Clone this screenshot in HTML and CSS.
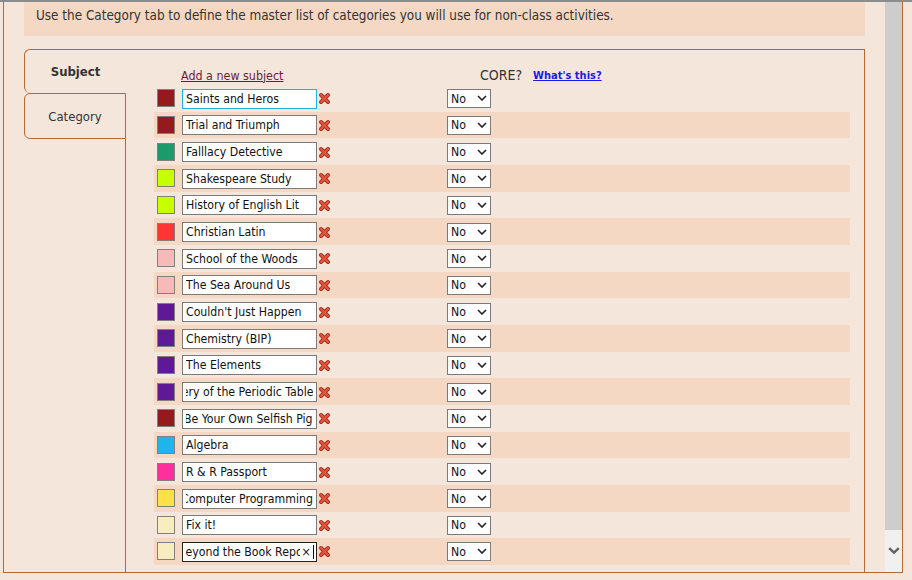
FILE: index.html
```html
<!DOCTYPE html>
<html lang="en">
<head>
    <meta charset="UTF-8">
    <title>Subjects and Categories</title>
    <link rel="stylesheet" href="styles.css">
</head>
<body>
    <div class="frame">
        <div class="viewport">
            <div class="intro">Use the Category tab to define the master list of categories you will use for non-class activities.</div>

            <div class="tabbox">
                <div class="tabs">
                    <div class="tab tab-active">Subject</div>
                    <div class="tab">Category</div>
                    <div class="tab-rest"></div>
                </div>

                <div class="panel">
                    <div class="panel-head">
                        <a class="add-link" href="#">Add a new subject</a>
                        <span class="core-label">CORE?</span>
                        <a class="help-link" href="#">What's this?</a>
                    </div>

                    <div class="subject-list">
                        <div class="subject-row">
                            <span class="swatch" style="background:#951a1d"></span>
                            <input class="subject-name focused" type="text" value="Saints and Heros">
                            <svg class="delete-icon" viewBox="0 0 13 13"><path class="x-edge" d="M3 3L10 10M10 3L3 10"/><path class="x-fill" d="M3 3L10 10M10 3L3 10"/></svg>
                            <span class="core-select"><select><option>No</option><option>Yes</option></select><svg class="chevron" viewBox="0 0 10 6"><path d="M1 1L5 5L9 1"/></svg></span>
                        </div>
                        <div class="subject-row">
                            <span class="swatch" style="background:#951a1d"></span>
                            <input class="subject-name" type="text" value="Trial and Triumph">
                            <svg class="delete-icon" viewBox="0 0 13 13"><path class="x-edge" d="M3 3L10 10M10 3L3 10"/><path class="x-fill" d="M3 3L10 10M10 3L3 10"/></svg>
                            <span class="core-select"><select><option>No</option><option>Yes</option></select><svg class="chevron" viewBox="0 0 10 6"><path d="M1 1L5 5L9 1"/></svg></span>
                        </div>
                        <div class="subject-row">
                            <span class="swatch" style="background:#1b9a6c"></span>
                            <input class="subject-name" type="text" value="Falllacy Detective">
                            <svg class="delete-icon" viewBox="0 0 13 13"><path class="x-edge" d="M3 3L10 10M10 3L3 10"/><path class="x-fill" d="M3 3L10 10M10 3L3 10"/></svg>
                            <span class="core-select"><select><option>No</option><option>Yes</option></select><svg class="chevron" viewBox="0 0 10 6"><path d="M1 1L5 5L9 1"/></svg></span>
                        </div>
                        <div class="subject-row">
                            <span class="swatch" style="background:#c8ff00"></span>
                            <input class="subject-name" type="text" value="Shakespeare Study">
                            <svg class="delete-icon" viewBox="0 0 13 13"><path class="x-edge" d="M3 3L10 10M10 3L3 10"/><path class="x-fill" d="M3 3L10 10M10 3L3 10"/></svg>
                            <span class="core-select"><select><option>No</option><option>Yes</option></select><svg class="chevron" viewBox="0 0 10 6"><path d="M1 1L5 5L9 1"/></svg></span>
                        </div>
                        <div class="subject-row">
                            <span class="swatch" style="background:#c8ff00"></span>
                            <input class="subject-name" type="text" value="History of English Lit">
                            <svg class="delete-icon" viewBox="0 0 13 13"><path class="x-edge" d="M3 3L10 10M10 3L3 10"/><path class="x-fill" d="M3 3L10 10M10 3L3 10"/></svg>
                            <span class="core-select"><select><option>No</option><option>Yes</option></select><svg class="chevron" viewBox="0 0 10 6"><path d="M1 1L5 5L9 1"/></svg></span>
                        </div>
                        <div class="subject-row">
                            <span class="swatch" style="background:#ff3535"></span>
                            <input class="subject-name" type="text" value="Christian Latin">
                            <svg class="delete-icon" viewBox="0 0 13 13"><path class="x-edge" d="M3 3L10 10M10 3L3 10"/><path class="x-fill" d="M3 3L10 10M10 3L3 10"/></svg>
                            <span class="core-select"><select><option>No</option><option>Yes</option></select><svg class="chevron" viewBox="0 0 10 6"><path d="M1 1L5 5L9 1"/></svg></span>
                        </div>
                        <div class="subject-row">
                            <span class="swatch" style="background:#f8b9b9"></span>
                            <input class="subject-name" type="text" value="School of the Woods">
                            <svg class="delete-icon" viewBox="0 0 13 13"><path class="x-edge" d="M3 3L10 10M10 3L3 10"/><path class="x-fill" d="M3 3L10 10M10 3L3 10"/></svg>
                            <span class="core-select"><select><option>No</option><option>Yes</option></select><svg class="chevron" viewBox="0 0 10 6"><path d="M1 1L5 5L9 1"/></svg></span>
                        </div>
                        <div class="subject-row">
                            <span class="swatch" style="background:#f8b9b9"></span>
                            <input class="subject-name" type="text" value="The Sea Around Us">
                            <svg class="delete-icon" viewBox="0 0 13 13"><path class="x-edge" d="M3 3L10 10M10 3L3 10"/><path class="x-fill" d="M3 3L10 10M10 3L3 10"/></svg>
                            <span class="core-select"><select><option>No</option><option>Yes</option></select><svg class="chevron" viewBox="0 0 10 6"><path d="M1 1L5 5L9 1"/></svg></span>
                        </div>
                        <div class="subject-row">
                            <span class="swatch" style="background:#5e1a96"></span>
                            <input class="subject-name" type="text" value="Couldn't Just Happen">
                            <svg class="delete-icon" viewBox="0 0 13 13"><path class="x-edge" d="M3 3L10 10M10 3L3 10"/><path class="x-fill" d="M3 3L10 10M10 3L3 10"/></svg>
                            <span class="core-select"><select><option>No</option><option>Yes</option></select><svg class="chevron" viewBox="0 0 10 6"><path d="M1 1L5 5L9 1"/></svg></span>
                        </div>
                        <div class="subject-row">
                            <span class="swatch" style="background:#5e1a96"></span>
                            <input class="subject-name" type="text" value="Chemistry (BIP)">
                            <svg class="delete-icon" viewBox="0 0 13 13"><path class="x-edge" d="M3 3L10 10M10 3L3 10"/><path class="x-fill" d="M3 3L10 10M10 3L3 10"/></svg>
                            <span class="core-select"><select><option>No</option><option>Yes</option></select><svg class="chevron" viewBox="0 0 10 6"><path d="M1 1L5 5L9 1"/></svg></span>
                        </div>
                        <div class="subject-row">
                            <span class="swatch" style="background:#5e1a96"></span>
                            <input class="subject-name" type="text" value="The Elements">
                            <svg class="delete-icon" viewBox="0 0 13 13"><path class="x-edge" d="M3 3L10 10M10 3L3 10"/><path class="x-fill" d="M3 3L10 10M10 3L3 10"/></svg>
                            <span class="core-select"><select><option>No</option><option>Yes</option></select><svg class="chevron" viewBox="0 0 10 6"><path d="M1 1L5 5L9 1"/></svg></span>
                        </div>
                        <div class="subject-row">
                            <span class="swatch" style="background:#5e1a96"></span>
                            <input class="subject-name" type="text" value="The Mystery of the Periodic Table" data-scroll="end">
                            <svg class="delete-icon" viewBox="0 0 13 13"><path class="x-edge" d="M3 3L10 10M10 3L3 10"/><path class="x-fill" d="M3 3L10 10M10 3L3 10"/></svg>
                            <span class="core-select"><select><option>No</option><option>Yes</option></select><svg class="chevron" viewBox="0 0 10 6"><path d="M1 1L5 5L9 1"/></svg></span>
                        </div>
                        <div class="subject-row">
                            <span class="swatch" style="background:#951a1d"></span>
                            <input class="subject-name" type="text" value="How to Be Your Own Selfish Pig" data-scroll="end">
                            <svg class="delete-icon" viewBox="0 0 13 13"><path class="x-edge" d="M3 3L10 10M10 3L3 10"/><path class="x-fill" d="M3 3L10 10M10 3L3 10"/></svg>
                            <span class="core-select"><select><option>No</option><option>Yes</option></select><svg class="chevron" viewBox="0 0 10 6"><path d="M1 1L5 5L9 1"/></svg></span>
                        </div>
                        <div class="subject-row">
                            <span class="swatch" style="background:#1fb5ea"></span>
                            <input class="subject-name" type="text" value="Algebra">
                            <svg class="delete-icon" viewBox="0 0 13 13"><path class="x-edge" d="M3 3L10 10M10 3L3 10"/><path class="x-fill" d="M3 3L10 10M10 3L3 10"/></svg>
                            <span class="core-select"><select><option>No</option><option>Yes</option></select><svg class="chevron" viewBox="0 0 10 6"><path d="M1 1L5 5L9 1"/></svg></span>
                        </div>
                        <div class="subject-row">
                            <span class="swatch" style="background:#ff2f9b"></span>
                            <input class="subject-name" type="text" value="R &amp; R Passport">
                            <svg class="delete-icon" viewBox="0 0 13 13"><path class="x-edge" d="M3 3L10 10M10 3L3 10"/><path class="x-fill" d="M3 3L10 10M10 3L3 10"/></svg>
                            <span class="core-select"><select><option>No</option><option>Yes</option></select><svg class="chevron" viewBox="0 0 10 6"><path d="M1 1L5 5L9 1"/></svg></span>
                        </div>
                        <div class="subject-row">
                            <span class="swatch" style="background:#ffdf4a"></span>
                            <input class="subject-name" type="text" value="Computer Programming" data-scroll="end">
                            <svg class="delete-icon" viewBox="0 0 13 13"><path class="x-edge" d="M3 3L10 10M10 3L3 10"/><path class="x-fill" d="M3 3L10 10M10 3L3 10"/></svg>
                            <span class="core-select"><select><option>No</option><option>Yes</option></select><svg class="chevron" viewBox="0 0 10 6"><path d="M1 1L5 5L9 1"/></svg></span>
                        </div>
                        <div class="subject-row">
                            <span class="swatch" style="background:#f8ecc0"></span>
                            <input class="subject-name" type="text" value="Fix it!">
                            <svg class="delete-icon" viewBox="0 0 13 13"><path class="x-edge" d="M3 3L10 10M10 3L3 10"/><path class="x-fill" d="M3 3L10 10M10 3L3 10"/></svg>
                            <span class="core-select"><select><option>No</option><option>Yes</option></select><svg class="chevron" viewBox="0 0 10 6"><path d="M1 1L5 5L9 1"/></svg></span>
                        </div>
                        <div class="subject-row">
                            <span class="swatch" style="background:#f8ecc0"></span>
                            <span class="editing">
                                <input class="subject-name active" type="text" value="Beyond the Book Report" data-scroll="8">
                                <span class="clear-btn">&times;</span>
                                <span class="caret"></span>
                            </span>
                            <svg class="delete-icon" viewBox="0 0 13 13"><path class="x-edge" d="M3 3L10 10M10 3L3 10"/><path class="x-fill" d="M3 3L10 10M10 3L3 10"/></svg>
                            <span class="core-select"><select><option>No</option><option>Yes</option></select><svg class="chevron" viewBox="0 0 10 6"><path d="M1 1L5 5L9 1"/></svg></span>
                        </div>
                    </div>
                </div>
            </div>
        </div>

        <div class="scrollbar">
            <div class="scroll-thumb"></div>
            <div class="scroll-end">
                <svg class="scroll-arrow" viewBox="0 0 12 7"><path d="M1.2 1.2L6 5.6L10.8 1.2"/></svg>
            </div>
        </div>
    </div>

    <script src="script.js"></script>
</body>
</html>
```

FILE: styles.css
```css
body {
    margin: 0;
    border-top: 2px solid #8c8c8c;
    background-color: #f5e6dc;
    font-family: "DejaVu Sans Condensed", "DejaVu Sans", Verdana, sans-serif;
    color: #333;
}
.frame {
    display: flex;
    width: 900px;
    height: 571px;
    margin-left: 3px;
    box-sizing: border-box;
    border-left: 1px solid #b5692e;
    border-right: 1px solid #b5692e;
    border-bottom: 1px solid #b5692e;
}
.viewport {
    flex: 1;
    overflow: hidden;
    padding: 0 20px;
}
.intro {
    background-color: #f5d8c3;
    height: 34px;
    box-sizing: border-box;
    padding: 5px 12px 0;
    line-height: 18px;
    font-size: 13.4px;
}
.tabbox {
    display: flex;
    margin-top: 13px;
}
.tabs {
    display: flex;
    flex-direction: column;
    width: 102px;
    flex-shrink: 0;
}
.tab {
    height: 46px;
    box-sizing: border-box;
    display: flex;
    align-items: center;
    justify-content: center;
    font-size: 13px;
    border: 1px solid #b5692e;
    border-radius: 6px 0 0 6px;
}
.tab-active {
    height: 44px;
    border-right: none;
    border-bottom: none;
    font-weight: bold;
}
.tab-rest {
    flex: 1;
    border-right: 1px solid #b5692e;
}
.panel {
    flex: 1;
    border-top: 1px solid #b5692e;
    border-right: 1px solid #b5692e;
    padding: 15px 14px 30px 28px;
}
.panel-head {
    display: flex;
    align-items: center;
    height: 20px;
    padding-left: 27px;
}
.add-link {
    width: 299px;
    font-size: 12.4px;
    color: #6d1d3c;
}
.core-label {
    font-size: 14px;
    color: #333;
    margin-right: 11px;
}
.help-link {
    font-size: 11px;
    font-weight: bold;
    color: #1a1ae6;
}
.subject-row {
    display: flex;
    align-items: center;
    height: 26.66px;
    padding-left: 3px;
}
.subject-row:nth-child(even) {
    background-color: #f5d8c3;
}
.swatch {
    width: 18px;
    height: 18px;
    box-sizing: border-box;
    border: 1px solid #808080;
    margin-right: 7px;
}
.subject-name {
    width: 135px;
    height: 20px;
    box-sizing: border-box;
    margin: 1px 0 0;
    padding: 0 3px;
    border: 1px solid #7a7a7a;
    background: white;
    font-family: inherit;
    font-size: 12.2px;
    color: #111;
    outline: none;
}
.subject-name.focused {
    border-color: #1fb0e8;
}
.subject-name.active {
    border-color: #222;
    padding-right: 16px;
}
.editing {
    position: relative;
    display: flex;
}
.clear-btn {
    position: absolute;
    right: 6px;
    top: 1px;
    line-height: 19px;
    font-size: 13px;
    color: #222;
}
.caret {
    position: absolute;
    right: 3px;
    top: 4px;
    width: 1px;
    height: 14px;
    background-color: #000;
}
.delete-icon {
    width: 13px;
    height: 13px;
    margin: 1px 0 0 1px;
}
.x-edge {
    stroke: #a8301e;
    stroke-width: 4;
    stroke-linecap: round;
    fill: none;
}
.x-fill {
    stroke: #e4553f;
    stroke-width: 2.1;
    stroke-linecap: round;
    fill: none;
}
.core-select {
    position: relative;
    display: flex;
    margin: 1px 0 0 116px;
}
.core-select select {
    appearance: none;
    width: 44px;
    height: 19px;
    margin: 0;
    padding: 0 0 0 3px;
    border: 1px solid #7a7a7a;
    border-radius: 0;
    background: white;
    font-family: inherit;
    font-size: 12.2px;
    color: #111;
}
.chevron {
    position: absolute;
    right: 4px;
    top: 6px;
    width: 10px;
    height: 6px;
    pointer-events: none;
}
.chevron path {
    stroke: #222;
    stroke-width: 1.6;
    fill: none;
}
.scrollbar {
    display: flex;
    flex-direction: column;
    width: 17px;
    background-color: #f0f0f0;
}
.scroll-thumb {
    height: 528px;
    background-color: #cdcdcd;
}
.scroll-end {
    display: flex;
    justify-content: center;
    padding-top: 17px;
}
.scroll-arrow {
    width: 12px;
    height: 7px;
}
.scroll-arrow path {
    stroke: #606060;
    stroke-width: 2.4;
    fill: none;
}
```

FILE: script.js
```js
document.querySelectorAll(".subject-name[data-scroll]").forEach(function (field) {
    const scroll = field.dataset.scroll;
    field.scrollLeft = scroll === "end" ? field.scrollWidth : parseInt(scroll);
});
```
